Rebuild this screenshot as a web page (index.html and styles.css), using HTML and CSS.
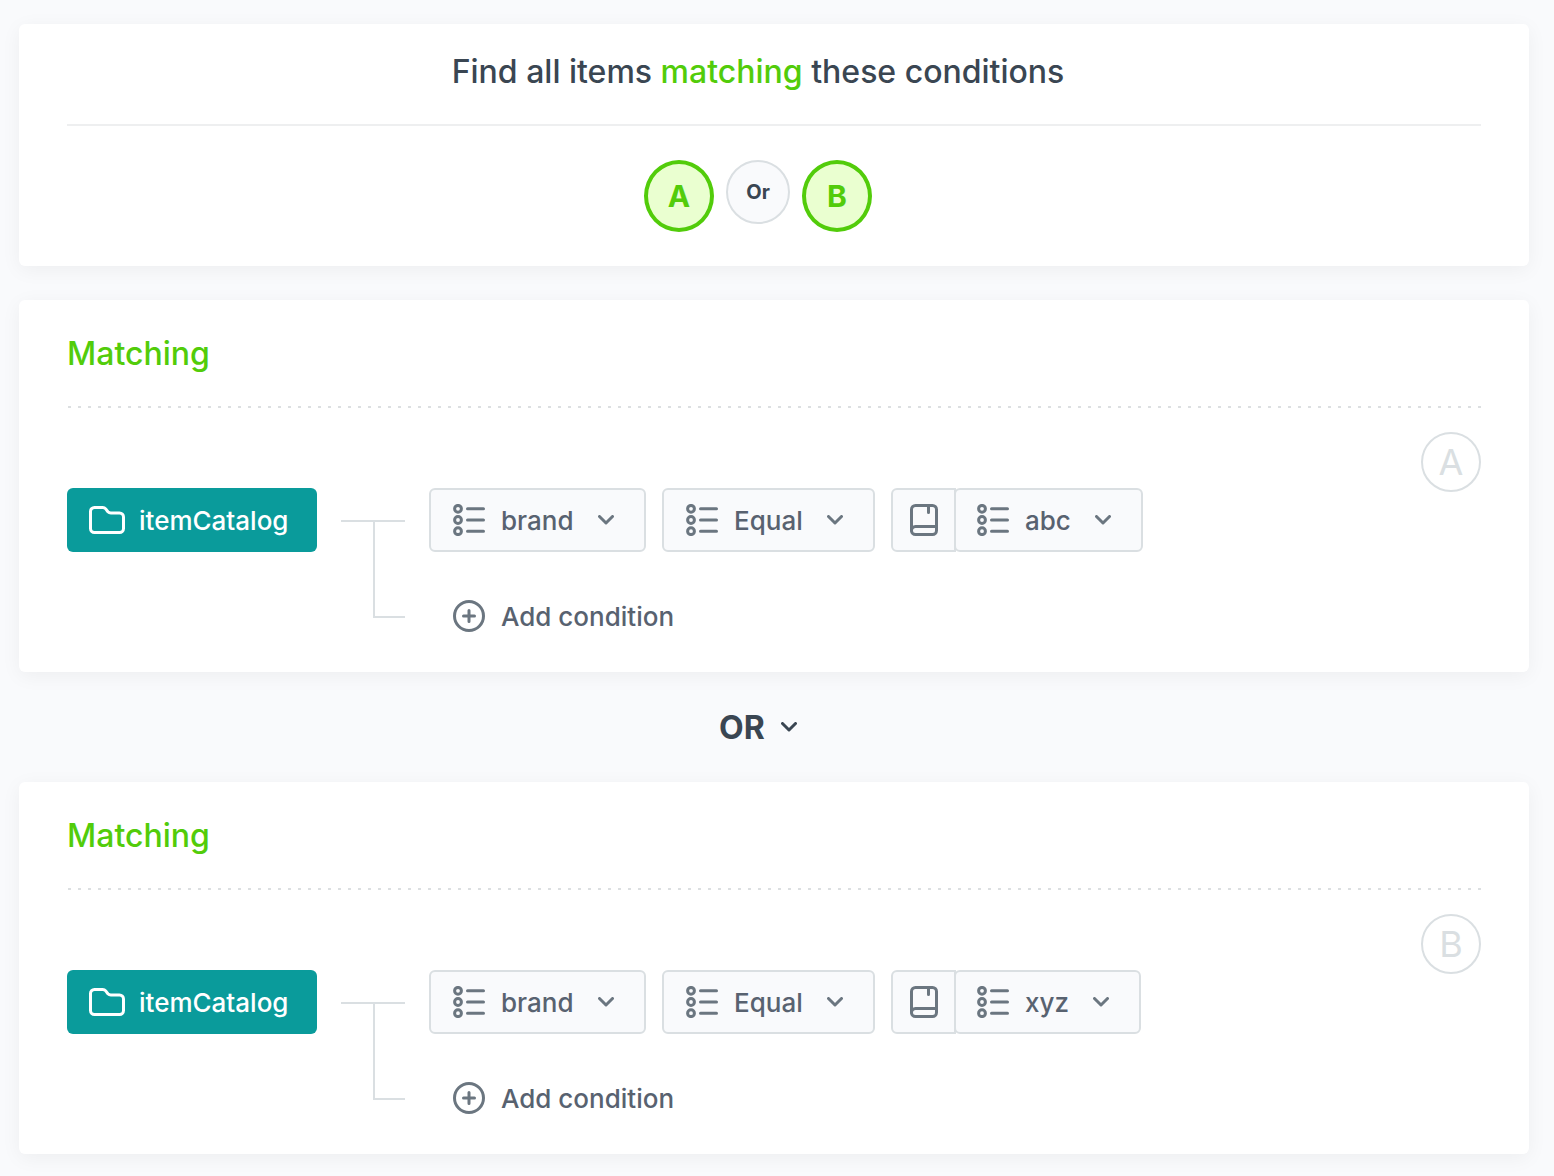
FILE: index.html
```html
<!DOCTYPE html>
<html lang="en">
  <head>
    <meta charset="utf-8" />
    <title>Item conditions</title>
    <link rel="stylesheet" href="styles.css" />
  </head>
  <body>
    <!-- shared icons -->
    <svg class="sprite" aria-hidden="true">
      <symbol id="icon-folder" viewBox="0 0 36 28">
        <path d="M1.5 5.5a4 4 0 0 1 4-4h8.200a4 4 0 0 1 3 1.400l2.200 2.800a4 4 0 0 0 3 1.300h8.600a4 4 0 0 1 4 4v11.500a4 4 0 0 1-4 4h-25a4 4 0 0 1-4-4z" />
      </symbol>
      <symbol id="icon-list" viewBox="0 0 32 32">
        <circle cx="5" cy="4.800" r="3.400" />
        <circle cx="5" cy="16" r="3.400" />
        <circle cx="5" cy="27.200" r="3.400" />
        <path d="M14.500 4.800h16M14.500 16h16M14.500 27.200h16" />
      </symbol>
      <symbol id="icon-chevron" viewBox="0 0 16 10">
        <path d="M1.500 1.500L8 8l6.500-6.500" />
      </symbol>
      <symbol id="icon-book" viewBox="0 0 28 32">
        <rect x="1.500" y="1.500" width="25" height="29" rx="4" />
        <path d="M18.500 2v6.500M1.500 26.500a4 4 0 0 1 4-4h21" />
      </symbol>
      <symbol id="icon-plus" viewBox="0 0 32 32">
        <circle cx="16" cy="16" r="14.500" />
        <path d="M16 10.500v11M10.500 16h11" />
      </symbol>
    </svg>

    <main class="page">
      <section class="card summary">
        <h1 class="summary-title">Find all items <em>matching</em> these conditions</h1>
        <div class="summary-logic">
          <span class="operand">A</span>
          <span class="operator">Or</span>
          <span class="operand">B</span>
        </div>
      </section>

      <section class="card group">
        <h2 class="group-title">Matching</h2>
        <div class="group-body">
          <div class="tree">
            <button type="button" class="node">
              <svg class="icon-folder"><use href="#icon-folder" /></svg>
              itemCatalog
            </button>
            <div class="connector"></div>
            <div class="conditions">
              <div class="condition">
                <label class="dropdown">
                  <svg class="icon-list"><use href="#icon-list" /></svg>
                  <select name="field-a" aria-label="Field"><option>brand</option></select>
                  <svg class="icon-chevron"><use href="#icon-chevron" /></svg>
                </label>
                <label class="dropdown">
                  <svg class="icon-list"><use href="#icon-list" /></svg>
                  <select name="operator-a" aria-label="Operator"><option>Equal</option></select>
                  <svg class="icon-chevron"><use href="#icon-chevron" /></svg>
                </label>
                <div class="value">
                  <button type="button" class="value-type" aria-label="Value type">
                    <svg class="icon-book"><use href="#icon-book" /></svg>
                  </button>
                  <label class="dropdown">
                    <svg class="icon-list"><use href="#icon-list" /></svg>
                    <select name="value-a" aria-label="Value"><option>abc</option></select>
                    <svg class="icon-chevron"><use href="#icon-chevron" /></svg>
                  </label>
                </div>
              </div>
              <button type="button" class="add">
                <svg class="icon-plus"><use href="#icon-plus" /></svg>
                Add condition
              </button>
            </div>
          </div>
          <span class="badge">A</span>
        </div>
      </section>

      <label class="joiner">
        <select name="joiner" aria-label="Join groups with"><option>OR</option></select>
        <svg class="icon-chevron"><use href="#icon-chevron" /></svg>
      </label>

      <section class="card group">
        <h2 class="group-title">Matching</h2>
        <div class="group-body">
          <div class="tree">
            <button type="button" class="node">
              <svg class="icon-folder"><use href="#icon-folder" /></svg>
              itemCatalog
            </button>
            <div class="connector"></div>
            <div class="conditions">
              <div class="condition">
                <label class="dropdown">
                  <svg class="icon-list"><use href="#icon-list" /></svg>
                  <select name="field-b" aria-label="Field"><option>brand</option></select>
                  <svg class="icon-chevron"><use href="#icon-chevron" /></svg>
                </label>
                <label class="dropdown">
                  <svg class="icon-list"><use href="#icon-list" /></svg>
                  <select name="operator-b" aria-label="Operator"><option>Equal</option></select>
                  <svg class="icon-chevron"><use href="#icon-chevron" /></svg>
                </label>
                <div class="value">
                  <button type="button" class="value-type" aria-label="Value type">
                    <svg class="icon-book"><use href="#icon-book" /></svg>
                  </button>
                  <label class="dropdown">
                    <svg class="icon-list"><use href="#icon-list" /></svg>
                    <select name="value-b" aria-label="Value"><option>xyz</option></select>
                    <svg class="icon-chevron"><use href="#icon-chevron" /></svg>
                  </label>
                </div>
              </div>
              <button type="button" class="add">
                <svg class="icon-plus"><use href="#icon-plus" /></svg>
                Add condition
              </button>
            </div>
          </div>
          <span class="badge">B</span>
        </div>
      </section>
    </main>
  </body>
</html>
```
FILE: styles.css
```css
*,
*::after {
  box-sizing: border-box;
}
body {
  margin: 0;
  background: #f9fafc;
  color: #3a4652;
  font-family: Inter, "Liberation Sans", sans-serif;
  font-size: 26px;
  font-weight: 550;
}
button,
select {
  margin: 0;
  padding: 0;
  border: 0;
  background: none;
  color: inherit;
  font: inherit;
  cursor: pointer;
}
select {
  appearance: none;
}
svg {
  flex: none;
  fill: none;
  stroke: #6b7680;
  stroke-width: 3;
  stroke-linecap: round;
  stroke-linejoin: round;
}
.sprite {
  display: none;
}
.page {
  padding: 24px 25px 22px 19px;
}
.card {
  padding: 0 48px 24px;
  border-radius: 6px;
  background: #fff;
  box-shadow: 0 4px 20px rgba(0, 0, 0, 0.05);
}

/* summary */
.summary {
  margin-bottom: 34px;
  padding-bottom: 34px;
}
.summary-title {
  margin: 0;
  padding: 28px 32px 32px 0;
  border-bottom: 2px solid #eeeff0;
  font-size: 32px;
  font-weight: 550;
  line-height: 40px;
  text-align: center;
}
.summary-title em {
  color: #52cc0a;
  font-style: normal;
}
.summary-logic {
  display: flex;
  justify-content: center;
  align-items: flex-start;
  gap: 12px;
  padding: 34px 32px 0 0;
}
.operand,
.operator,
.badge {
  display: flex;
  justify-content: center;
  align-items: center;
  border-radius: 50%;
}
.operand {
  width: 70px;
  height: 72px;
  border: 4px solid #52cc0a;
  background: #eaffd0;
  color: #52cc0a;
  font-size: 30px;
  font-weight: 700;
}
.operator {
  width: 64px;
  height: 64px;
  border: 2px solid #dadfe2;
  background: #f9fafc;
  font-size: 20px;
  font-weight: 650;
}

/* condition groups */
.group-title {
  margin: 0;
  padding: 34px 0 32px;
  color: #52cc0a;
  font-size: 32px;
  font-weight: 550;
  line-height: 40px;
}
.group-body {
  display: flex;
  align-items: flex-start;
  padding-top: 26px;
  background: repeating-linear-gradient(90deg, transparent 0 1px, #dcdfe1 1px 4px, transparent 4px 10px) top / 100% 2px no-repeat;
}
.tree {
  display: flex;
  flex: 1;
  align-items: flex-start;
  gap: 24px;
  margin-top: 56px;
}
.node {
  display: flex;
  align-items: center;
  gap: 14px;
  min-width: 250px;
  height: 64px;
  padding: 0 22px;
  border-radius: 6px;
  background: #0a9b9b;
  color: #fff;
}
.node svg {
  stroke: #fff;
}
.connector {
  width: 64px;
  margin-top: 32px;
  border-top: 2px solid #dadfe2;
}
.connector::after {
  content: "";
  display: block;
  height: 96px;
  margin-left: 32px;
  border: solid #dadfe2;
  border-width: 0 0 2px 2px;
}
.conditions {
  display: flex;
  flex-direction: column;
  align-items: flex-start;
  gap: 32px;
  color: #586270;
}
.condition {
  display: flex;
  gap: 16px;
}
.dropdown {
  display: flex;
  align-items: center;
  height: 64px;
  padding: 0 30px 0 22px;
  border: 2px solid #dadfe2;
  border-radius: 6px;
  background: #f9fafc;
}
.dropdown select {
  margin: 0 24px 0 16px;
}
.value {
  display: flex;
}
.value-type {
  display: flex;
  justify-content: center;
  align-items: center;
  width: 65px;
  border: 2px solid #dadfe2;
  border-radius: 6px 0 0 6px;
  background: #f9fafc;
}
.value .dropdown {
  margin-left: -2px;
  padding-left: 21px;
}
.add {
  display: flex;
  align-items: center;
  gap: 16px;
  height: 64px;
  padding: 0 24px;
}
.badge {
  width: 60px;
  height: 60px;
  border: 2px solid #dadfe2;
  color: #dadfe2;
  font-size: 36px;
  font-weight: 400;
}

.joiner {
  display: flex;
  justify-content: center;
  align-items: center;
  gap: 16px;
  height: 110px;
  padding-right: 32px;
  font-size: 32px;
  font-weight: 650;
}
.joiner svg {
  stroke: #3a4652;
}

.icon-folder {
  width: 36px;
  height: 28px;
}
.icon-list,
.icon-plus {
  width: 32px;
  height: 32px;
}
.icon-chevron {
  width: 16px;
  height: 10px;
}
.icon-book {
  width: 28px;
  height: 32px;
}
```
